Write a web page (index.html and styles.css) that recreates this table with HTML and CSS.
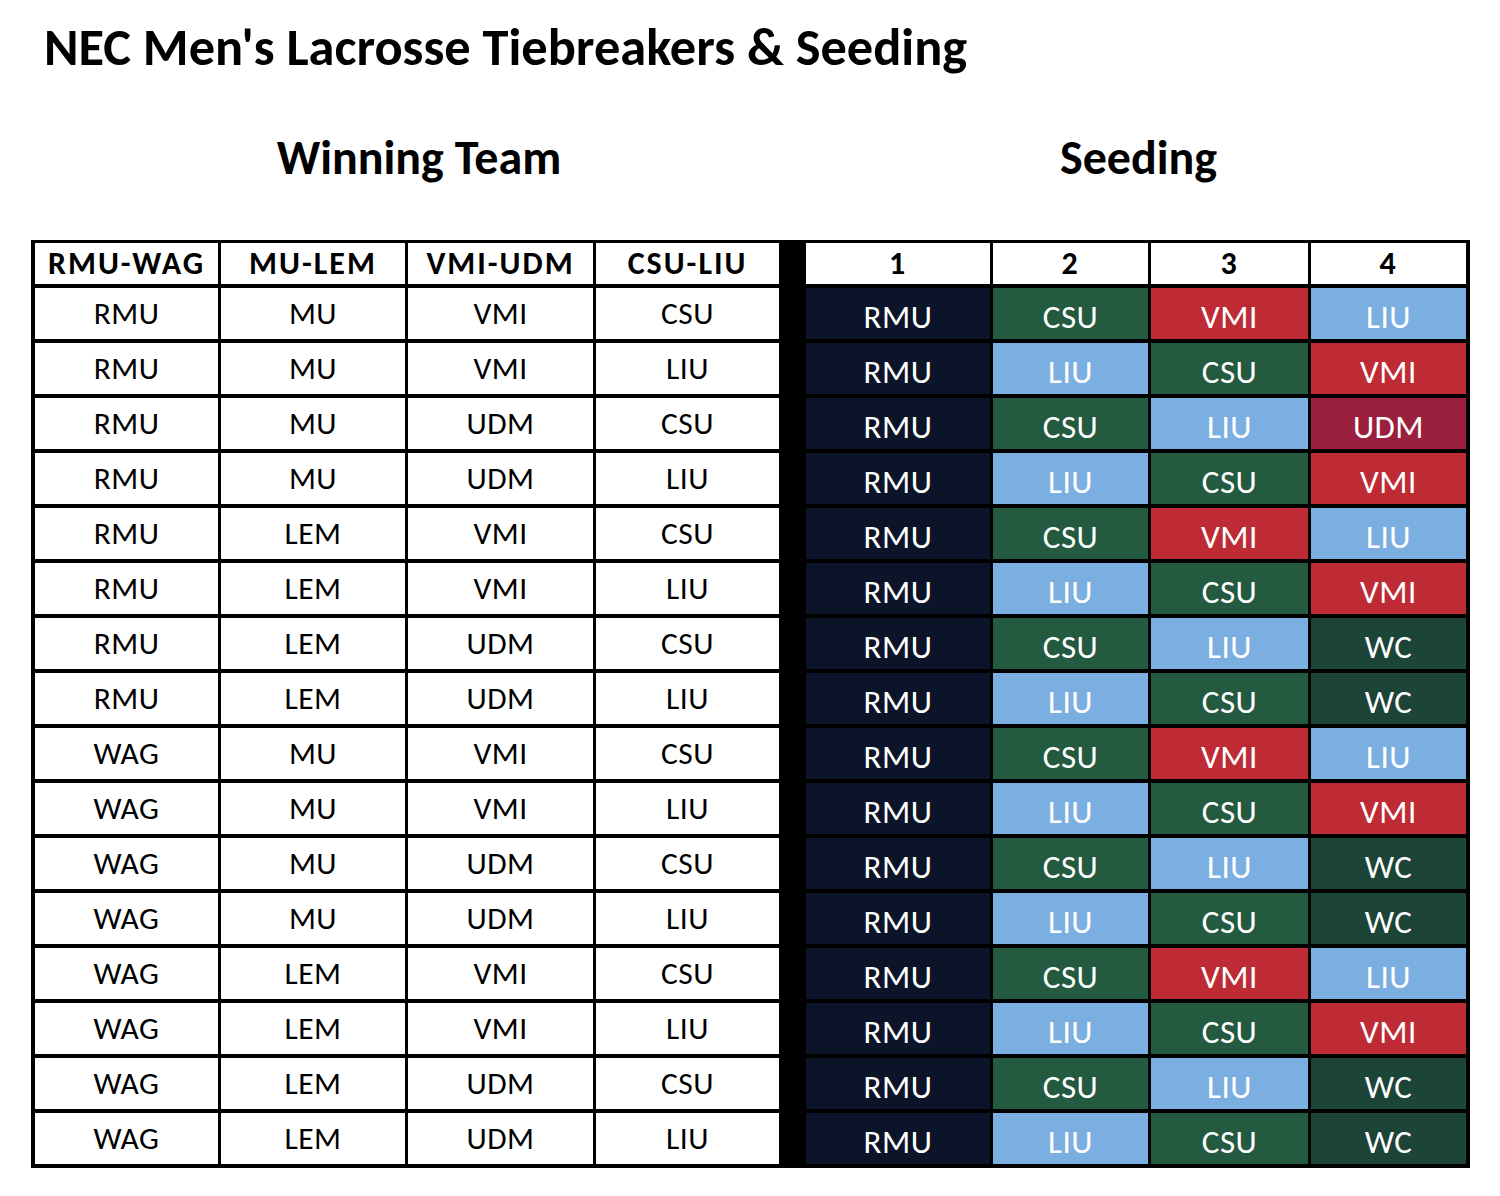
FILE: index.html
```html
<!DOCTYPE html>
<html lang="en">
<head>
<meta charset="utf-8">
<title>NEC Men's Lacrosse Tiebreakers &amp; Seeding</title>
<link rel="stylesheet" href="styles.css">
</head>
<body>
<h1 class="title">NEC Men's Lacrosse Tiebreakers &amp; Seeding</h1>
<div class="subheads">
  <div class="sub sub-left">Winning Team</div>
  <div class="sub sub-right">Seeding</div>
</div>
<div class="grid">
  <div class="hd">RMU-WAG</div><div class="hd">MU-LEM</div><div class="hd">VMI-UDM</div><div class="hd">CSU-LIU</div><div class="sp"></div><div class="hd num">1</div><div class="hd num">2</div><div class="hd num">3</div><div class="hd num">4</div>

  <div class="c">RMU</div><div class="c">MU</div><div class="c">VMI</div><div class="c">CSU</div><div class="sp"></div><div class="s rmu">RMU</div><div class="s csu">CSU</div><div class="s vmi">VMI</div><div class="s liu">LIU</div>
  <div class="c">RMU</div><div class="c">MU</div><div class="c">VMI</div><div class="c">LIU</div><div class="sp"></div><div class="s rmu">RMU</div><div class="s liu">LIU</div><div class="s csu">CSU</div><div class="s vmi">VMI</div>
  <div class="c">RMU</div><div class="c">MU</div><div class="c">UDM</div><div class="c">CSU</div><div class="sp"></div><div class="s rmu">RMU</div><div class="s csu">CSU</div><div class="s liu">LIU</div><div class="s udm">UDM</div>
  <div class="c">RMU</div><div class="c">MU</div><div class="c">UDM</div><div class="c">LIU</div><div class="sp"></div><div class="s rmu">RMU</div><div class="s liu">LIU</div><div class="s csu">CSU</div><div class="s vmi">VMI</div>
  <div class="c">RMU</div><div class="c">LEM</div><div class="c">VMI</div><div class="c">CSU</div><div class="sp"></div><div class="s rmu">RMU</div><div class="s csu">CSU</div><div class="s vmi">VMI</div><div class="s liu">LIU</div>
  <div class="c">RMU</div><div class="c">LEM</div><div class="c">VMI</div><div class="c">LIU</div><div class="sp"></div><div class="s rmu">RMU</div><div class="s liu">LIU</div><div class="s csu">CSU</div><div class="s vmi">VMI</div>
  <div class="c">RMU</div><div class="c">LEM</div><div class="c">UDM</div><div class="c">CSU</div><div class="sp"></div><div class="s rmu">RMU</div><div class="s csu">CSU</div><div class="s liu">LIU</div><div class="s wc">WC</div>
  <div class="c">RMU</div><div class="c">LEM</div><div class="c">UDM</div><div class="c">LIU</div><div class="sp"></div><div class="s rmu">RMU</div><div class="s liu">LIU</div><div class="s csu">CSU</div><div class="s wc">WC</div>
  <div class="c">WAG</div><div class="c">MU</div><div class="c">VMI</div><div class="c">CSU</div><div class="sp"></div><div class="s rmu">RMU</div><div class="s csu">CSU</div><div class="s vmi">VMI</div><div class="s liu">LIU</div>
  <div class="c">WAG</div><div class="c">MU</div><div class="c">VMI</div><div class="c">LIU</div><div class="sp"></div><div class="s rmu">RMU</div><div class="s liu">LIU</div><div class="s csu">CSU</div><div class="s vmi">VMI</div>
  <div class="c">WAG</div><div class="c">MU</div><div class="c">UDM</div><div class="c">CSU</div><div class="sp"></div><div class="s rmu">RMU</div><div class="s csu">CSU</div><div class="s liu">LIU</div><div class="s wc">WC</div>
  <div class="c">WAG</div><div class="c">MU</div><div class="c">UDM</div><div class="c">LIU</div><div class="sp"></div><div class="s rmu">RMU</div><div class="s liu">LIU</div><div class="s csu">CSU</div><div class="s wc">WC</div>
  <div class="c">WAG</div><div class="c">LEM</div><div class="c">VMI</div><div class="c">CSU</div><div class="sp"></div><div class="s rmu">RMU</div><div class="s csu">CSU</div><div class="s vmi">VMI</div><div class="s liu">LIU</div>
  <div class="c">WAG</div><div class="c">LEM</div><div class="c">VMI</div><div class="c">LIU</div><div class="sp"></div><div class="s rmu">RMU</div><div class="s liu">LIU</div><div class="s csu">CSU</div><div class="s vmi">VMI</div>
  <div class="c">WAG</div><div class="c">LEM</div><div class="c">UDM</div><div class="c">CSU</div><div class="sp"></div><div class="s rmu">RMU</div><div class="s csu">CSU</div><div class="s liu">LIU</div><div class="s wc">WC</div>
  <div class="c">WAG</div><div class="c">LEM</div><div class="c">UDM</div><div class="c">LIU</div><div class="sp"></div><div class="s rmu">RMU</div><div class="s liu">LIU</div><div class="s csu">CSU</div><div class="s wc">WC</div>
</div>
</body>
</html>
```

FILE: styles.css
```css
html, body {
  margin: 0;
  padding: 0;
  background: #ffffff;
}

body {
  font-family: Carlito, "Open Sans", "Noto Sans", sans-serif;
  color: #000;
}

.title {
  margin: 0;
  padding: 16px 0 0 44px;
  height: 62px;
  font-family: Carlito, Lato, "Open Sans", sans-serif;
  font-weight: 700;
  font-size: 52.4px;
  line-height: 62px;
  white-space: nowrap;
}

.subheads {
  display: flex;
  padding-left: 31px;
  margin-top: 50px;
  height: 60px;
}

.sub {
  font-family: Carlito, "Open Sans", sans-serif;
  font-weight: 700;
  font-size: 48px;
  line-height: 60px;
  text-align: center;
}

.sub-left { width: 776px; }
.sub-right { width: 663px; }

.grid {
  margin: 52px 0 0 31px;
  width: 1439px;
  box-sizing: border-box;
  background: #000;
  padding: 3px 4px 4px 4px;
  display: grid;
  grid-template-columns: 183px 184px 185px 183px 21px 184px 155px 157px 155px;
  grid-template-rows: 41px;
  grid-auto-rows: 51px;
  column-gap: 3px;
  row-gap: 4px;
}

.hd {
  background: #fff;
  font-weight: 700;
  font-size: 32px;
  letter-spacing: 2px;
  line-height: 41px;
  text-align: center;
  white-space: nowrap;
}

.sp {
  background: #000;
}

.c {
  background: #fff;
  font-size: 31.5px;
  letter-spacing: 0.5px;
  line-height: 51px;
  text-align: center;
}

.s {
  color: #fff;
  font-size: 33px;
  letter-spacing: 0.5px;
  line-height: 51px;
  padding-top: 4px;
  box-sizing: border-box;
  text-align: center;
}

.rmu { background: #0b1429; }
.csu { background: #235a40; }
.vmi { background: #be2b35; }
.liu { background: #7bafe1; }
.udm { background: #9b1f3e; }
.wc  { background: #1c4437; }
```
